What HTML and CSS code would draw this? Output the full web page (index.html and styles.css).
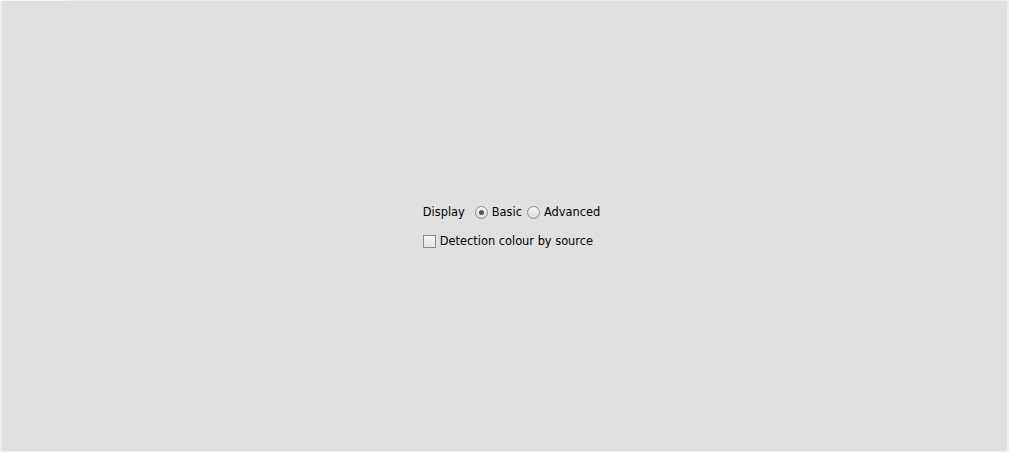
FILE: index.html
```html
<!DOCTYPE html>
<html>
<head>
<meta charset="utf-8">
<link rel="stylesheet" href="styles.css">
</head>
<body>
<div class="frame">
  <span class="tab-mark"></span>
  <div class="panel">
    <div class="form">
      <div class="row">
        <span class="label">Display</span>
        <label class="opt"><span class="radio checked"></span>Basic</label>
        <label class="opt"><span class="radio"></span>Advanced</label>
      </div>
      <div class="row row2">
        <label class="opt"><span class="check"></span>Detection colour by source</label>
      </div>
    </div>
  </div>
</div>
</body>
</html>
```
FILE: styles.css
```css
html, body {
  margin: 0;
  padding: 0;
  width: 1009px;
  height: 452px;
  overflow: hidden;
  background: #eeeeee;
}
.frame {
  position: relative;
  box-sizing: border-box;
  width: 1009px;
  height: 452px;
  padding: 1px 2px 1px 2px;
  background: #eeeeee;
}
.tab-mark {
  position: absolute;
  left: 0;
  top: 0;
  width: 66px;
  height: 1px;
  background: #f6f6f6;
}
.panel {
  width: 100%;
  height: 100%;
  background: #e0e0e0;
  display: flex;
  align-items: center;
  justify-content: center;
  font-family: "DejaVu Sans", sans-serif;
  font-size: 11.4px;
  color: #000;
}
.form {
  display: flex;
  flex-direction: column;
  gap: 12px;
  margin-left: 14px;
  margin-top: 1px;
}
.row {
  display: flex;
  align-items: center;
  height: 17px;
}
.label {
  margin-right: 10px;
}
.opt {
  display: flex;
  align-items: center;
  margin-right: 5px;
}
.opt:last-child {
  margin-right: 0;
}
.radio {
  box-sizing: border-box;
  width: 13px;
  height: 13px;
  border-radius: 50%;
  border: 1px solid #8a8a8a;
  background: linear-gradient(#f6f6f6, #dcdcdc);
  margin-right: 4px;
  position: relative;
}
.radio.checked::after {
  content: "";
  position: absolute;
  left: 3px;
  top: 3px;
  width: 5px;
  height: 5px;
  border-radius: 50%;
  background: #555;
}
.check {
  box-sizing: border-box;
  width: 13px;
  height: 13px;
  border: 1px solid #8a8a8a;
  background: linear-gradient(#f8f8f8, #e4e4e4);
  margin-right: 4px;
}
```
